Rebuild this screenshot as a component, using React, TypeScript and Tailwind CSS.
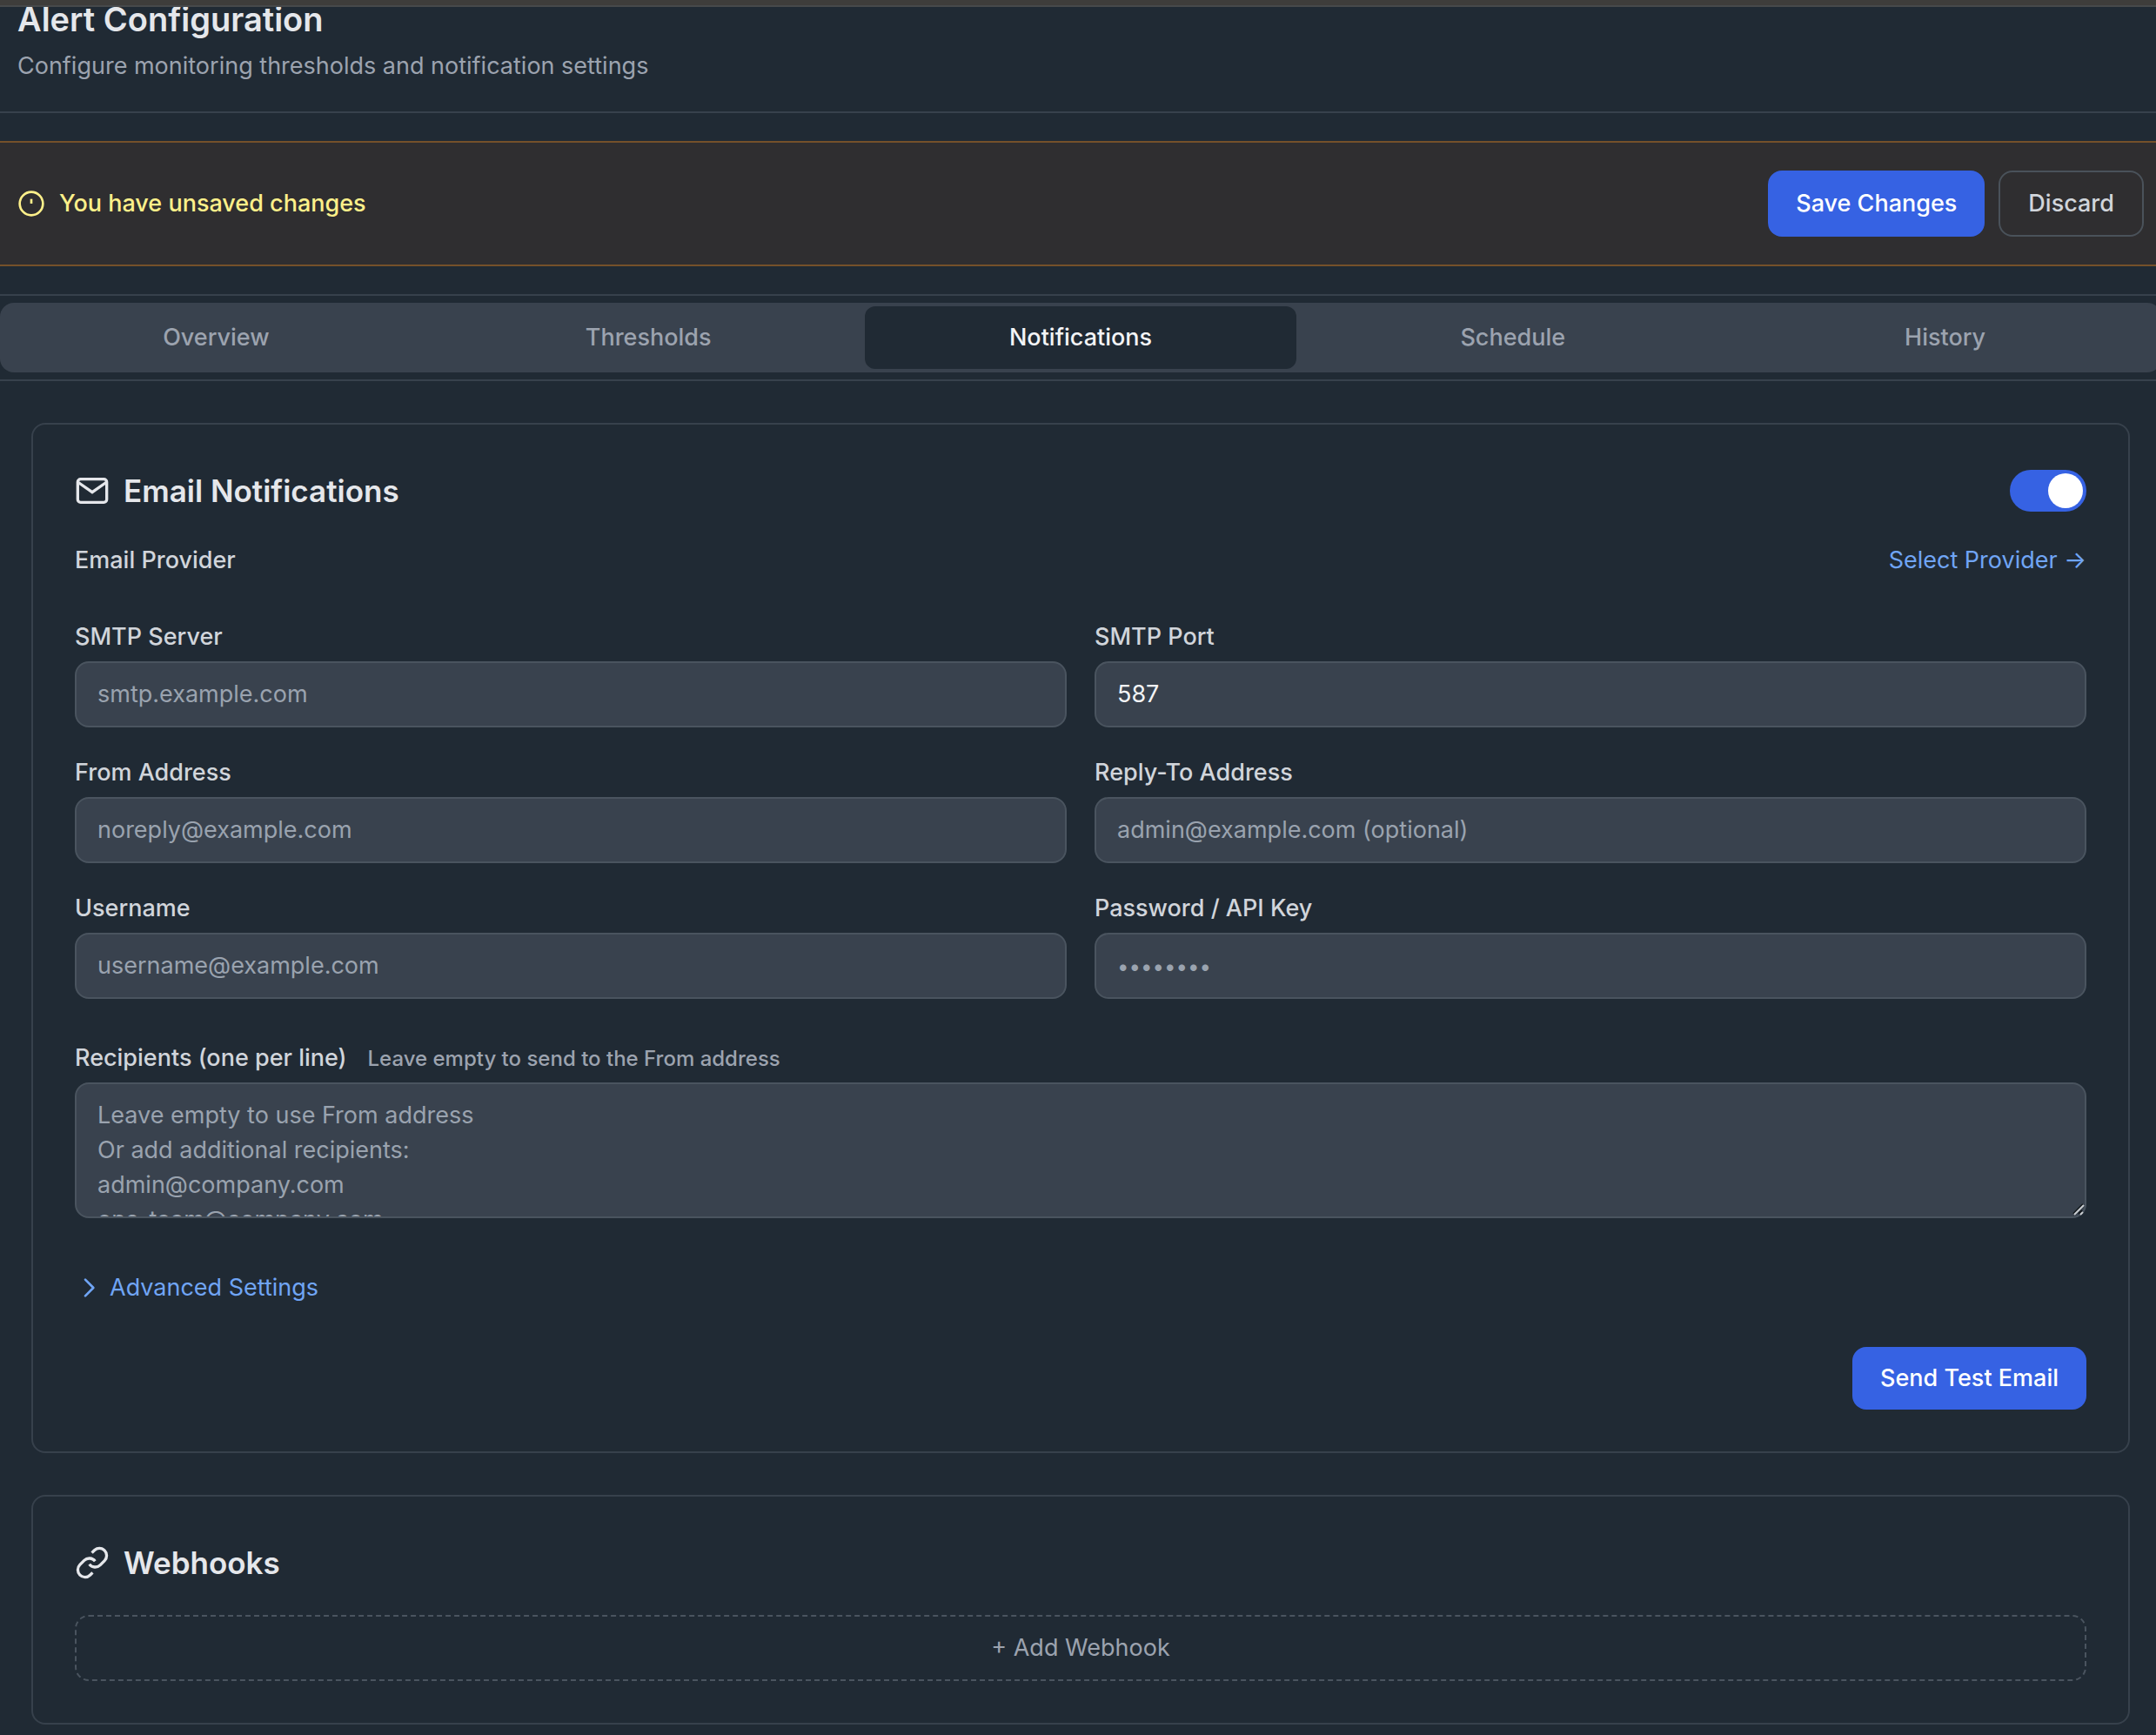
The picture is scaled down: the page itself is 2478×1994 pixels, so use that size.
import { useState, type InputHTMLAttributes, type ReactNode } from "react";

const tabs = ["Overview", "Thresholds", "Notifications", "Schedule", "History"];

const fieldStyle =
  "block w-full rounded-2xl border-2 border-[#4a545f] bg-[#39424e] px-6 py-4 text-[27px] leading-10 text-gray-100 outline-none placeholder:text-[#9aa3af] placeholder:opacity-100";

function Field({ label, id, ...props }: { label: string; id: string } & InputHTMLAttributes<HTMLInputElement>) {
  return (
    <div className="flex flex-col gap-2">
      <label htmlFor={id} className="font-medium text-[#d1d5db]">
        {label}
      </label>
      <input id={id} {...props} className={`${fieldStyle} ${props.className ?? ""}`} />
    </div>
  );
}

function Card({ children }: { children: ReactNode }) {
  return <section className="rounded-2xl border-2 border-[#37414c] p-12">{children}</section>;
}

function MailIcon() {
  return (
    <svg className="size-10" viewBox="0 0 24 24" fill="none" stroke="currentColor" strokeWidth="2">
      <path d="M4 4h16c1.1 0 2 .9 2 2v12c0 1.1-.9 2-2 2H4c-1.1 0-2-.9-2-2V6c0-1.1.9-2 2-2z" />
      <polyline points="22,6 12,13 2,6" />
    </svg>
  );
}

function LinkIcon() {
  return (
    <svg className="size-10" viewBox="0 0 24 24" fill="none" stroke="currentColor" strokeWidth="2">
      <path d="M10 13a5 5 0 0 0 7.54.54l3-3a5 5 0 0 0-7.07-7.07l-1.72 1.71" />
      <path d="M14 11a5 5 0 0 0-7.54-.54l-3 3a5 5 0 0 0 7.07 7.07l1.71-1.71" />
    </svg>
  );
}

export default function App() {
  const [activeTab, setActiveTab] = useState("Notifications");
  const [emailEnabled, setEmailEnabled] = useState(true);
  const [port, setPort] = useState("587");

  return (
    <div className="relative min-h-screen overflow-hidden bg-[#202a34] font-['Inter',sans-serif] text-[27px] leading-10 text-gray-100">
      <div className="absolute inset-x-0 top-0 h-2 border-b-2 border-[#47494b] bg-[#3e3d3b]" />

      <div className="-mr-1.5">
        <header className="border-b-2 border-[#37414c] px-5 pb-8">
          <h1 className="text-[38px] leading-[44px] font-semibold text-[#e5e7eb]">Alert Configuration</h1>
          <p className="mt-3 text-[#9ca3af]">Configure monitoring thresholds and notification settings</p>
        </header>

        <div className="mt-8 flex items-center justify-between border-y-2 border-[#75512a] bg-[#2f2e30] px-5 py-8">
          <div className="flex items-center gap-4 text-[#fdf08a]">
            <svg className="size-8" viewBox="0 0 24 24" fill="none" stroke="currentColor" strokeWidth="2">
              <circle cx="12" cy="12" r="10" />
              <path d="M12 8v4" />
            </svg>
            <span className="font-medium">You have unsaved changes</span>
          </div>
          <div className="flex gap-4">
            <button className="rounded-2xl bg-[#3662e3] px-8 font-medium text-white">Save Changes</button>
            <button className="rounded-2xl border-2 border-[#4a525a] px-8 py-4 font-medium text-[#d1d5db]">Discard</button>
          </div>
        </div>

        <nav className="mt-8 border-y-2 border-[#37414c] py-2">
          <div role="tablist" className="grid grid-cols-5 rounded-2xl bg-[#39424e] py-1">
            {tabs.map((tab) => (
              <button
                key={tab}
                role="tab"
                aria-selected={tab === activeTab}
                onClick={() => setActiveTab(tab)}
                className={
                  tab === activeTab
                    ? "rounded-xl bg-[#202a34] py-4 font-medium text-[#f3f4f6]"
                    : "rounded-xl py-4 font-medium text-[#9ca3af]"
                }
              >
                {tab}
              </button>
            ))}
          </div>
        </nav>

        <main className="flex flex-col gap-12 px-9 pt-12 pb-3">
          <Card>
            <div className="flex items-center justify-between">
              <h2 className="flex items-center gap-4 text-[35px] leading-[56px] font-semibold text-[#e5e7eb]">
                <MailIcon />
                Email Notifications
              </h2>
              <label className="flex cursor-pointer">
                <input
                  type="checkbox"
                  role="switch"
                  aria-label="Enable email notifications"
                  className="peer sr-only"
                  checked={emailEnabled}
                  onChange={(e) => setEmailEnabled(e.target.checked)}
                />
                <span className="flex w-[88px] rounded-full bg-[#4a545f] p-1 peer-checked:justify-end peer-checked:bg-[#3662e3]">
                  <span className="size-10 rounded-full bg-white" />
                </span>
              </label>
            </div>

            <div className="mt-8 flex items-center justify-between">
              <span className="font-medium text-[#d1d5db]">Email Provider</span>
              <a href="#provider" className="text-[#70a5f5]">Select Provider →</a>
            </div>

            <div className="mt-12 grid grid-cols-2 gap-8">
              <Field id="server" label="SMTP Server" placeholder="smtp.example.com" />
              <Field id="port" label="SMTP Port" value={port} onChange={(e) => setPort(e.target.value)} />
              <Field id="from" label="From Address" placeholder="noreply@example.com" />
              <Field id="reply" label="Reply-To Address" placeholder="admin@example.com (optional)" />
              <Field id="username" label="Username" placeholder="username@example.com" />
              <Field
                id="password"
                label="Password / API Key"
                type="password"
                placeholder="••••••••"
                className="placeholder:text-[24px]"
              />
            </div>

            <div className="mt-12 flex flex-col gap-2">
              <label htmlFor="recipients" className="font-medium text-[#d1d5db]">
                Recipients (one per line)
                <span className="ml-6 text-[24px] leading-none text-[#9ca3af]">Leave empty to send to the From address</span>
              </label>
              <div className="relative">
                <textarea
                  id="recipients"
                  rows={3}
                  className={`${fieldStyle} resize-none overflow-hidden`}
                  placeholder={"Leave empty to use From address\nOr add additional recipients:\nadmin@company.com\nops-team@company.com"}
                />
                <svg className="pointer-events-none absolute right-0.5 bottom-0.5 size-4" viewBox="0 0 16 16" fill="none" strokeWidth="2">
                  <path d="M3 13L14 2M9 13l4-4" stroke="#11161b" />
                  <path d="M4 14L15 3M11 14l3-3" stroke="#c8ccd0" />
                </svg>
              </div>
            </div>

            <button className="mt-[60px] flex items-center gap-2 text-[#70a5f5]">
              <svg className="size-8" viewBox="0 0 24 24" fill="none" stroke="currentColor" strokeWidth="2" strokeLinecap="round" strokeLinejoin="round">
                <path d="M9 5l7 7-7 7" />
              </svg>
              Advanced Settings
            </button>

            <div className="mt-12 flex justify-end">
              <button className="rounded-2xl bg-[#3662e3] px-8 py-4 font-medium text-white">Send Test Email</button>
            </div>
          </Card>

          <Card>
            <h2 className="flex items-center gap-4 text-[35px] leading-[56px] font-semibold text-[#e5e7eb]">
              <LinkIcon />
              Webhooks
            </h2>
            <button className="mt-8 w-full rounded-2xl border-2 border-dashed border-[#4a545f] py-4 text-[#9ca3af]">
              + Add Webhook
            </button>
          </Card>
        </main>
      </div>
    </div>
  );
}
